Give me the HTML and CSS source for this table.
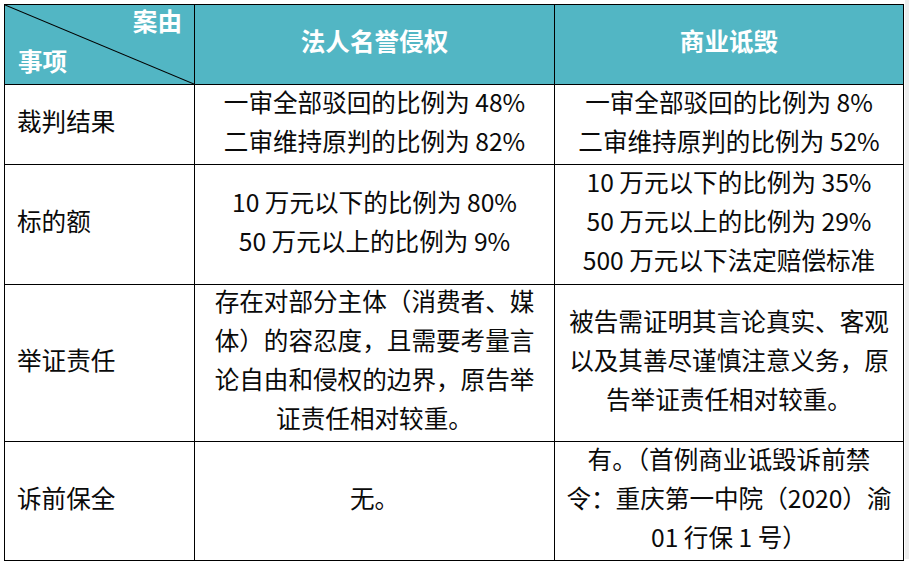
FILE: index.html
```html
<!DOCTYPE html>
<html lang="zh-CN">
<head>
<meta charset="utf-8">
<title>法人名誉侵权与商业诋毁对比</title>
<link rel="stylesheet" href="styles.css">
</head>
<body>
<div class="page">
  <table class="cmp">
    <colgroup>
      <col class="c1">
      <col class="c2">
      <col class="c3">
    </colgroup>
    <thead>
      <tr class="r-head">
        <th class="corner">
          <div class="corner-inner">
            <svg class="diag" viewBox="0 0 190 79" preserveAspectRatio="none" aria-hidden="true">
              <line x1="0" y1="0" x2="190" y2="79" stroke="#000" stroke-width="1.1"/>
            </svg>
            <span class="corner-top">案由</span>
            <span class="corner-bottom">事项</span>
          </div>
        </th>
        <th><div class="t">法人名誉侵权</div></th>
        <th><div class="t">商业诋毁</div></th>
      </tr>
    </thead>
    <tbody>
      <tr class="r1">
        <td class="label"><div class="t">裁判结果</div></td>
        <td><div class="t">一审全部驳回的比例为 48%<br>二审维持原判的比例为 82%</div></td>
        <td><div class="t">一审全部驳回的比例为 8%<br>二审维持原判的比例为 52%</div></td>
      </tr>
      <tr class="r2">
        <td class="label"><div class="t">标的额</div></td>
        <td><div class="t">10 万元以下的比例为 80%<br>50 万元以上的比例为 9%</div></td>
        <td><div class="t">10 万元以下的比例为 35%<br>50 万元以上的比例为 29%<br>500 万元以下法定赔偿标准</div></td>
      </tr>
      <tr class="r3">
        <td class="label"><div class="t">举证责任</div></td>
        <td><div class="t">存在对部分主体（消费者、媒<br>体）的容忍度，且需要考量言<br>论自由和侵权的边界，原告举<br>证责任相对较重。</div></td>
        <td><div class="t">被告需证明其言论真实、客观<br>以及其善尽谨慎注意义务，原<br>告举证责任相对较重。</div></td>
      </tr>
      <tr class="r4">
        <td class="label"><div class="t">诉前保全</div></td>
        <td><div class="t">无。</div></td>
        <td><div class="t">有。（首例商业诋毁诉前禁<br>令：重庆第一中院（2020）渝<br>01 行保 1 号）</div></td>
      </tr>
    </tbody>
  </table>
  <div class="edge"></div>
</div>
</body>
</html>
```

FILE: styles.css
```css
html, body {
  margin: 0;
  padding: 0;
  background: #ffffff;
}

.page {
  display: flex;
  align-items: flex-start;
  padding: 4px 0 0 4px;
  height: 563px;
  box-sizing: border-box;
}

.cmp {
  border-collapse: collapse;
  table-layout: fixed;
  width: 899px;
  font-family: "Noto Sans CJK SC", "Noto Sans", sans-serif;
  font-size: 24.6px;
  line-height: 39px;
  color: #0a0a0a;
}

.c1 { width: 190px; }
.c2 { width: 360px; }
.c3 { width: 349px; }

.cmp th,
.cmp td {
  border: 1px solid #000;
  padding: 0 4px;
  text-align: center;
  vertical-align: middle;
  white-space: nowrap;
}

/* nudge glyphs up within their line boxes to match the reference font metrics */
.t {
  margin: -4px 0 4px;
}

.cmp th {
  background: #52b6c4;
  color: #ffffff;
  font-weight: bold;
}

.r-head { height: 79px; }
.r1 { height: 80px; }
.r2 { height: 120px; }
.r3 { height: 157px; }
.r4 { height: 119px; }

.cmp th.corner {
  padding: 0;
}

.corner-inner {
  position: relative;
  display: flex;
  flex-direction: column;
  justify-content: space-between;
  height: 79px;
  box-sizing: border-box;
  padding: 0 12px 9px 13px;
  line-height: 30px;
}

.diag {
  position: absolute;
  left: 0;
  top: 0;
  width: 100%;
  height: 100%;
  display: block;
}

.corner-top { text-align: right; }
.corner-bottom { text-align: left; }

.cmp td.label {
  text-align: left;
  padding-left: 12px;
}

.edge {
  width: 5px;
  height: 559px;
  margin-top: -4px;
  margin-left: 1px;
  background: #ededed;
}
```
